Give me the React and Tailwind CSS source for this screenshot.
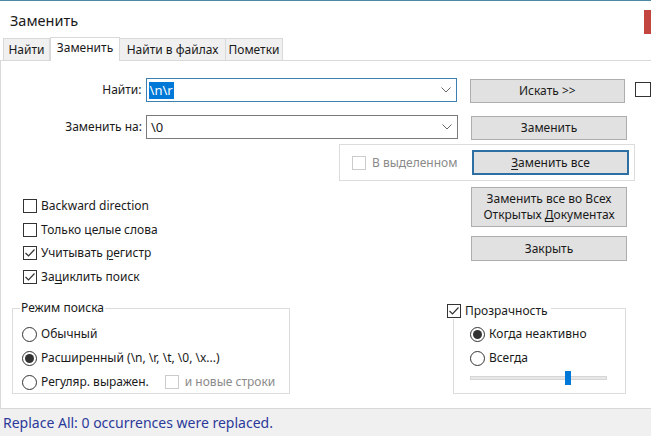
import React from "react";

const font = { fontFamily: '"Noto Sans", "Open Sans", sans-serif' };

function Check({ checked, disabled }) {
  return (
    <span
      className={`inline-flex w-[14px] h-[14px] shrink-0 items-center justify-center border bg-white ${
        disabled ? "border-[#cccccc]" : "border-[#333333]"
      }`}
    >
      {checked && (
        <svg width="12" height="12" viewBox="0 0 12 12">
          <polyline points="1.5,6 4.5,9 10.5,2.5" fill="none" stroke="#333" strokeWidth="1.2" />
        </svg>
      )}
    </span>
  );
}

function Radio({ checked }) {
  return (
    <span className="inline-flex w-[15px] h-[15px] shrink-0 items-center justify-center rounded-full border border-[#333333] bg-white">
      {checked && <span className="w-[9px] h-[9px] rounded-full bg-[#333333]" />}
    </span>
  );
}

function Chevron() {
  return (
    <svg width="10" height="6" viewBox="0 0 10 6" className="mr-[5px]">
      <polyline points="0.5,0.5 5,5 9.5,0.5" fill="none" stroke="#666" strokeWidth="1" />
    </svg>
  );
}

function Btn({ children, className = "" }) {
  return (
    <div
      className={`w-[156px] flex items-center justify-center bg-[#e1e1e1] border border-[#adadad] text-[12px] text-[#1a1a1a] leading-[16px] text-center whitespace-nowrap ${className}`}
    >
      {children}
    </div>
  );
}

export default function App() {
  return (
    <div className="w-[651px] h-[436px] bg-white flex flex-col overflow-hidden text-[#1a1a1a] whitespace-nowrap" style={font}>
      {/* title bar */}
      <div className="h-[37px] border-t border-[#4a8aa6] flex items-start relative shrink-0">
        <div className="pl-[10px] pt-[9px] text-[14.5px] leading-[20px]">Заменить</div>
        <div className="absolute right-0 top-[9px] w-[7px] h-[24px] bg-[#c2453f]" />
      </div>
      {/* tabs */}
      <div className="h-[24px] shrink-0 flex items-end pl-[3px] border-b border-[#d9d9d9] text-[12px]">
        <div className="w-[47px] h-[22px] flex items-center justify-center bg-[#f0f0f0] border border-b-0 border-[#d9d9d9]">Найти</div>
        <div className="w-[70px] h-[24px] flex items-center justify-center bg-white border border-b-0 border-[#d9d9d9] -mb-px pb-[3px]">Заменить</div>
        <div className="w-[106px] h-[22px] flex items-center justify-center bg-[#f0f0f0] border border-b-0 border-l-0 border-[#d9d9d9]">Найти в файлах</div>
        <div className="w-[57px] h-[22px] flex items-center justify-center bg-[#f0f0f0] border border-b-0 border-l-0 border-[#d9d9d9]">Пометки</div>
      </div>
      {/* body */}
      <div className="flex-1 flex flex-col border-l-2 border-[#d9d9d9] -ml-[1px] text-[12px]">
        {/* row 1 */}
        <div className="flex items-start mt-[17px]">
          <div className="w-[145px] text-right leading-[24px] pr-[4px]">Найти:</div>
          <div className="w-[312px] h-[24px] border border-[#3c7fb1] flex items-center justify-between pl-[2px]">
            <span className="bg-[#0078d7] text-white leading-[17px] px-[1px] text-[13px]">\n\r</span>
            <Chevron />
          </div>
          <Btn className="h-[24px] ml-[13px] mt-[1px]">Искать &gt;&gt;</Btn>
          <div className="ml-[10px] mt-[4px] w-[16px] h-[15px] border border-[#333]" />
        </div>
        {/* row 2 */}
        <div className="flex items-start mt-[12px]">
          <div className="w-[145px] text-right leading-[24px] pr-[4px]">Заменить на:</div>
          <div className="w-[312px] h-[24px] border border-[#7a7a7a] flex items-center justify-between pl-[4px]">
            <span className="leading-[17px] text-[13px]">\0</span>
            <Chevron />
          </div>
          <Btn className="h-[24px] ml-[13px] mt-[1px]">Заменить</Btn>
        </div>
        {/* row 3 */}
        <div className="ml-[338px] mt-[4px] w-[296px] h-[37px] border border-[#dcdcdc] flex items-center pl-[12px]">
          <Check disabled />
          <span className="ml-[6px] w-[86px] text-[#8a8a8a]">В выделенном</span>
          <div className="ml-[14px] w-[157px] h-[25px] border-2 border-[#2d6fa3] bg-[#e1e1e1] flex items-center justify-center">
            <span>
              <span className="underline underline-offset-2">З</span>аменить все
            </span>
          </div>
        </div>
        {/* row 4 */}
        <div className="flex">
          <div className="flex flex-col ml-[22px] mt-[18px] gap-[9.6px]">
            {[
              ["Backward direction", false, null],
              ["Только целые слова", false, null],
              ["Учитывать регистр", true, "r"],
              ["Зациклить поиск", true, "c"],
            ].map(([t, c, u]) => (
              <div key={t} className="flex items-center h-[14px] gap-[4px]">
                <Check checked={c} />
                <span className="leading-[14px]">
                  {u === "r" ? (
                    <>
                      Учитывать <span className="underline underline-offset-2">р</span>егистр
                    </>
                  ) : u === "c" ? (
                    <>
                      За<span className="underline underline-offset-2">ц</span>иклить поиск
                    </>
                  ) : (
                    t
                  )}
                </span>
              </div>
            ))}
          </div>
          <div className="flex flex-col ml-auto mr-[24px] mt-[6px] gap-[9px]">
            <Btn className="h-[40px]">
              <span>
                Заменить все во Всех
                <br />
                Открытых <span className="underline underline-offset-2">Д</span>окументах
              </span>
            </Btn>
            <Btn className="h-[25px]">Закрыть</Btn>
          </div>
        </div>
        {/* row 5 */}
        <div className="flex items-start mt-[24px]">
          <div className="relative ml-[11px] w-[278px] h-[86px] border border-[#dcdcdc] pl-[9px] pt-[18px]">
            <span className="absolute left-[7px] -top-[9px] px-[1px] bg-white leading-[16px]">Режим поиска</span>
            <div className="flex flex-col gap-[9px]">
              <div className="flex items-center gap-[4px] h-[15px]">
                <Radio />
                <span>Обычный</span>
              </div>
              <div className="flex items-center gap-[4px] h-[15px]">
                <Radio checked />
                <span>Расширенный (\n, \r, \t, \0, \x...)</span>
              </div>
              <div className="flex items-center gap-[4px] h-[15px]">
                <Radio />
                <span>Регуляр. выражен.</span>
                <span className="ml-[12px] flex items-center gap-[6px]">
                  <Check disabled />
                  <span className="text-[#8a8a8a]">и новые строки</span>
                </span>
              </div>
            </div>
          </div>
          <div className="relative ml-[163px] w-[173px] h-[86px] border border-[#dcdcdc] pl-[16px] pt-[18px]">
            <span className="absolute -left-[7px] -top-[6px] pr-[3px] leading-[16px] flex items-center gap-[4px] bg-white">
              <Check checked />
              <span>Прозрачность</span>
            </span>
            <div className="flex flex-col gap-[9px]">
              <div className="flex items-center gap-[4px] h-[15px]">
                <Radio checked />
                <span>Когда неактивно</span>
              </div>
              <div className="flex items-center gap-[4px] h-[15px]">
                <Radio />
                <span>Всегда</span>
              </div>
              <div className="relative w-[137px] h-[4px] mt-[1px] bg-[#e7e7e7] border border-[#d6d6d6]">
                <div className="absolute left-[94px] -top-[6px] w-[6px] h-[14px] bg-[#0078d7]" />
              </div>
            </div>
          </div>
        </div>
      </div>
      {/* status bar */}
      <div className="h-[28px] shrink-0 bg-[#f0f0f0] border-t border-[#d9d9d9] flex items-center pl-[3px] text-[14px] text-[#2b3a9a]">
        Replace All: 0 occurrences were replaced.
      </div>
    </div>
  );
}
